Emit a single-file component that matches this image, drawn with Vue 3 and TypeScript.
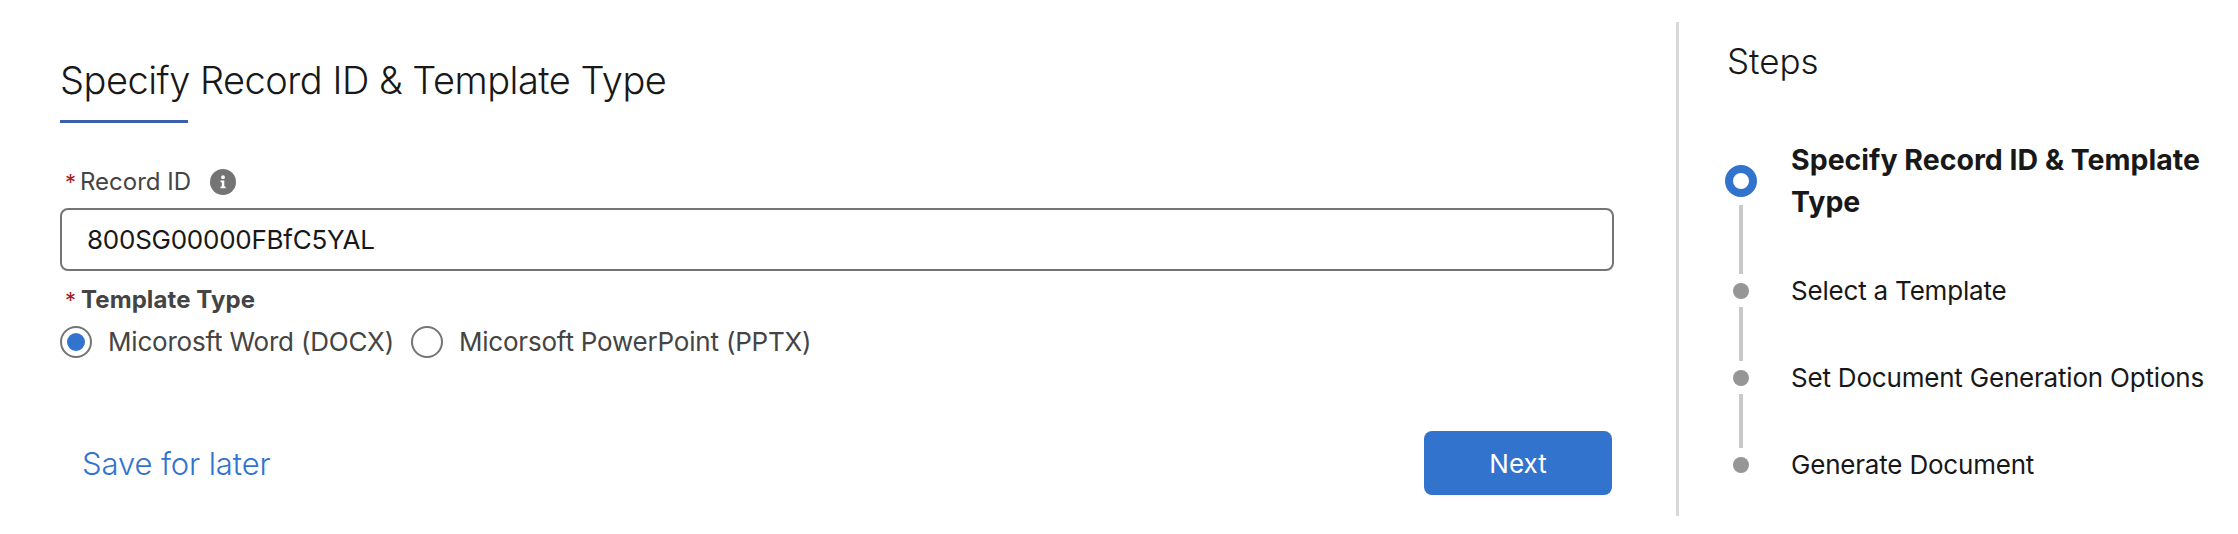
<script setup lang="ts">
import { ref } from 'vue'

interface Step {
  label: string
  current?: boolean
}

const recordId = ref('800SG00000FBfC5YAL')
const steps: Step[] = [
  { label: 'Specify Record ID & Template Type', current: true },
  { label: 'Select a Template' },
  { label: 'Set Document Generation Options' },
  { label: 'Generate Document' },
]
</script>

<template>
  <div class="page">
    <main class="form">
      <h1 class="title">Specify Record ID &amp; Template Type</h1>
      <div class="rule"></div>

      <div class="label-row record-label">
        <span class="req">*</span>
        <span class="label">Record ID</span>
        <svg class="info" viewBox="0 0 26 26" aria-hidden="true">
          <circle cx="13" cy="13" r="13" fill="#747474" />
          <circle cx="13" cy="8.2" r="1.9" fill="#fff" />
          <path d="M10.6 11.4h3.7v6h1.2v1.8h-5v-1.8h1.3v-4.2h-1.2z" fill="#fff" />
        </svg>
      </div>
      <input class="input" v-model="recordId" type="text" />

      <div class="label-row type-label">
        <span class="req">*</span>
        <span class="label strong">Template Type</span>
      </div>
      <div class="radios">
        <label class="radio">
          <span class="circle on"></span>
          <span class="radio-text">Micorosft Word (DOCX)</span>
        </label>
        <label class="radio">
          <span class="circle"></span>
          <span class="radio-text">Micorsoft PowerPoint (PPTX)</span>
        </label>
      </div>

      <div class="actions">
        <a class="save" href="#">Save for later</a>
        <button class="next" type="button">Next</button>
      </div>
    </main>

    <aside class="side">
      <h2 class="side-title">Steps</h2>
      <ol class="steps">
        <li v-for="(s, i) in steps" :key="s.label" class="step" :class="{ current: s.current }">
          <span class="marker" :class="{ last: i === steps.length - 1 }"></span>
          <span class="step-text">{{ s.label }}</span>
        </li>
      </ol>
    </aside>
  </div>
</template>

<style>
html,
body {
  margin: 0;
  background: #fff;
}
</style>

<style scoped>
.page {
  width: 2238px;
  height: 534px;
  box-sizing: border-box;
  display: flex;
  padding-top: 22px;
  font-family: Inter, "Noto Sans", sans-serif;
  color: #181818;
}
.form {
  width: 1554px;
  margin-left: 60px;
  margin-right: 62px;
  display: flex;
  flex-direction: column;
}
.title {
  margin: 33px 0 0;
  font-size: 38px;
  line-height: 50px;
  font-weight: 300;
  letter-spacing: -0.5px;
  white-space: nowrap;
}
.rule {
  width: 128px;
  height: 3px;
  margin-top: 15px;
  background: #3a5fae;
}
.label-row {
  display: flex;
  align-items: center;
  color: #444;
  font-size: 24px;
  line-height: 34px;
}
.record-label {
  margin-top: 42px;
}
.req {
  color: #a81c1c;
  margin-left: 5px;
  margin-right: 4px;
  font-size: 22px;
  width: 11px;
}
.info {
  width: 26px;
  height: 26px;
  margin-left: 19px;
}
.input {
  box-sizing: border-box;
  width: 100%;
  height: 63px;
  margin-top: 9px;
  padding: 0 25px;
  border: 2px solid #747474;
  border-radius: 8px;
  font: 400 26px Inter, "Noto Sans", sans-serif;
  letter-spacing: -0.25px;
  color: #181818;
  outline: none;
}
.type-label {
  margin-top: 12px;
}
.strong {
  font-weight: 700;
  letter-spacing: 0.1px;
  margin-left: 1px;
}
.radios {
  display: flex;
  gap: 17px;
  margin-top: 7px;
}
.radio {
  display: flex;
  align-items: center;
  gap: 16px;
  font-size: 26px;
  letter-spacing: -0.2px;
  line-height: 36px;
  color: #444;
}
.circle {
  box-sizing: border-box;
  width: 32px;
  height: 32px;
  border: 2px solid #747474;
  border-radius: 50%;
  display: flex;
  align-items: center;
  justify-content: center;
  flex: none;
}
.circle.on::after {
  content: "";
  width: 18px;
  height: 18px;
  border-radius: 50%;
  background: #3273ce;
}
.actions {
  display: flex;
  justify-content: space-between;
  align-items: center;
  margin-top: 71px;
  padding: 0 2px 0 22px;
}
.save {
  color: #3273ce;
  font-size: 31px;
  font-weight: 300;
  letter-spacing: -0.1px;
  text-decoration: none;
}
.next {
  width: 188px;
  height: 64px;
  border: 0;
  border-radius: 8px;
  background: #3273ce;
  color: #fff;
  font: 400 26px Inter, "Noto Sans", sans-serif;
}
.side {
  flex: 1;
  height: 494px;
  border-left: 3px solid #d8d8d8;
  padding-left: 48px;
  display: flex;
  flex-direction: column;
}
.side-title {
  margin: 17px 0 0;
  font-size: 35px;
  line-height: 44px;
  font-weight: 300;
}
.steps {
  list-style: none;
  margin: 56px 0 0;
  padding: 0;
  display: flex;
  flex-direction: column;
  gap: 45px;
}
.step {
  display: flex;
  align-items: center;
  height: 42px;
}
.step.current {
  height: 84px;
  margin-bottom: 2px;
}
.marker {
  position: relative;
  box-sizing: border-box;
  flex: none;
  width: 16px;
  height: 16px;
  margin: 0 42px 0 6px;
  border-radius: 50%;
  background: #969696;
}
.marker::after {
  content: "";
  position: absolute;
  left: 6px;
  top: 24px;
  width: 4px;
  height: 54px;
  background: #c9c9c9;
}
.marker.last::after {
  display: none;
}
.current .marker {
  width: 32px;
  height: 32px;
  margin: 0 34px 0 -2px;
  border: 8px solid #3273ce;
  background: #fff;
}
.current .marker::after {
  left: 6px;
  top: 32px;
  height: 69px;
}
.step-text {
  font-size: 26px;
  letter-spacing: -0.2px;
  line-height: 42px;
  width: 420px;
  white-space: nowrap;
}
.current .step-text {
  font-size: 28.5px;
  letter-spacing: 0;
  font-weight: 700;
  white-space: normal;
}
</style>
